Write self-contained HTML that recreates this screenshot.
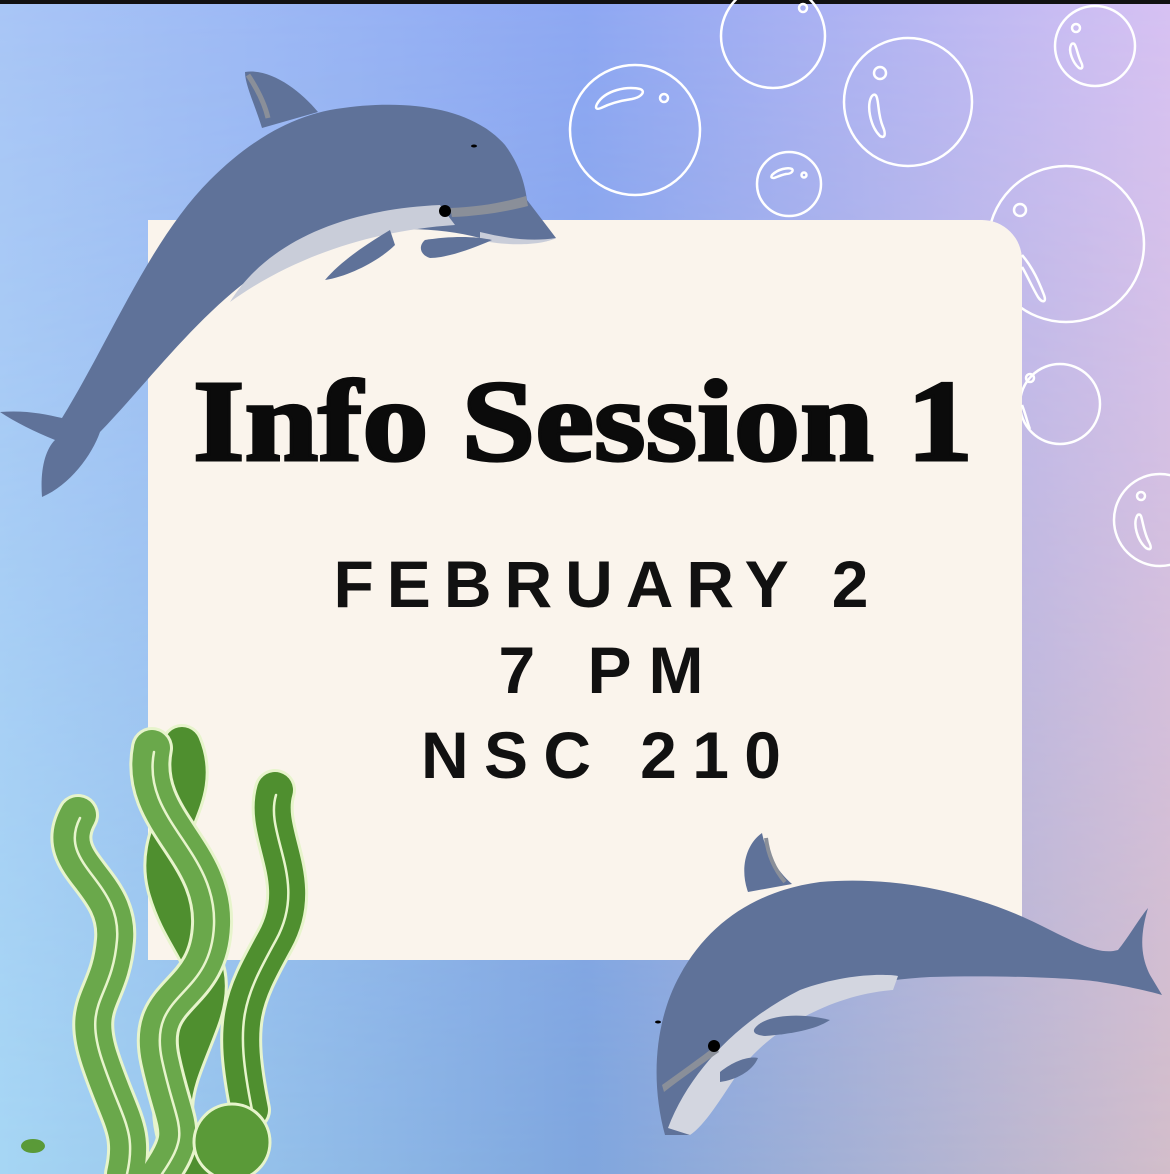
<!DOCTYPE html>
<html><head><meta charset="utf-8"><style>
html,body{margin:0;padding:0}
body{width:1170px;height:1174px;overflow:hidden;position:relative;font-family:"Liberation Sans",sans-serif}
svg{position:absolute;left:0;top:0}
</style></head><body>
<svg width="1170" height="1174" viewBox="0 0 1170 1174">
<defs>
<linearGradient id="gt" x1="0" y1="0" x2="1" y2="0">
<stop offset="0" stop-color="#a9c6f6"/><stop offset="0.5" stop-color="#8ea8f3"/><stop offset="1" stop-color="#d7c2f3"/></linearGradient>
<linearGradient id="gb" x1="0" y1="0" x2="1" y2="0">
<stop offset="0" stop-color="#a6d6f4"/><stop offset="0.5" stop-color="#7fa6de"/><stop offset="1" stop-color="#d2bdca"/></linearGradient>
<mask id="m"><linearGradient id="mv" x1="0" y1="0" x2="0" y2="1"><stop offset="0" stop-color="#000"/><stop offset="1" stop-color="#fff"/></linearGradient><rect width="1170" height="1174" fill="url(#mv)"/></mask>
</defs>
<rect width="1170" height="1174" fill="url(#gt)"/>
<rect width="1170" height="1174" fill="url(#gb)" mask="url(#m)"/>
<rect width="1170" height="4" fill="#111"/>
<!-- bubbles -->
<g fill="none" stroke="#fff" stroke-width="2.5">
<circle cx="635" cy="130" r="65"/><path d="M597 104c8-14 30-18 43-15 6 2 2 8-8 10-14 2-25 6-31 9-5 2-6 0-4-4z"/><circle cx="664" cy="98" r="4"/>
<circle cx="773" cy="36" r="52"/><circle cx="803" cy="8" r="4"/>
<circle cx="908" cy="102" r="64"/><circle cx="880" cy="73" r="6"/><path d="M872 96c-6 8-2 30 8 40 5 3 6-2 3-9-5-12-4-22-6-29-1-4-3-4-5-2z"/>
<circle cx="1095" cy="46" r="40"/><circle cx="1076" cy="28" r="4"/><path d="M1071 45c-3 6 2 18 8 23 4 2 4-2 2-6-3-6-4-13-6-17-1-2-3-2-4 0z"/>
<circle cx="789" cy="184" r="32"/><path d="M772 175c6-6 16-8 20-6 2 2-1 5-6 5-5 1-9 3-12 4-3 0-3-1-2-3z"/><circle cx="804" cy="175" r="2.5"/>
<circle cx="1066" cy="244" r="78"/><circle cx="1020" cy="210" r="6"/>
<circle cx="1060" cy="404" r="40"/>
<circle cx="1160" cy="520" r="46"/><circle cx="1141" cy="496" r="4"/><path d="M1137 516c-4 8 0 24 9 32 5 3 6 0 3-6-5-9-6-20-8-26-1-2-3-2-4 0z"/>
</g>
<!-- card -->
<path d="M148 220H982a40 40 0 0 1 40 40V920a40 40 0 0 1-40 40H148z" fill="#faf4ec"/>
<g fill="none" stroke="#fff" stroke-width="2.5">
<path d="M1022 255c12 14 18 30 22 40 3 8-2 8-6 2-6-10-12-24-16-30"/><path d="M1022 405c4 10 6 20 8 24"/><circle cx="1030" cy="378" r="4"/>
</g>
<!-- text -->
<text x="583" y="460" text-anchor="middle" font-family="'Liberation Serif',serif" font-weight="bold" font-size="116" textLength="780" lengthAdjust="spacingAndGlyphs" fill="#0b0b0b" stroke="#0b0b0b" stroke-width="3">Info Session 1</text>
<g font-family="'Liberation Sans',sans-serif" font-weight="bold" font-size="66" fill="#111" text-anchor="middle">
<text x="601" y="607" textLength="535" lengthAdjust="spacing">FEBRUARY 2</text>
<text x="601" y="693" textLength="205" lengthAdjust="spacing">7 PM</text>
<text x="601" y="778" textLength="360" lengthAdjust="spacing">NSC 210</text>
</g>
<!-- top dolphin -->
<path d="M262 128C255 105 245 85 245 72 270 68 300 90 318 112Z" fill="#5f7299"/>
<path d="M248 75C258 90 265 105 268 118" stroke="#8a8f99" stroke-width="5" fill="none"/>
<path d="M62 418C110 340 150 240 210 180 250 140 290 118 330 110 400 98 470 105 505 145 520 165 525 185 527 200L556 238C540 246 500 242 480 238 420 222 330 225 262 270 200 312 150 380 100 432 92 455 70 485 42 497 40 470 45 450 55 440 35 432 15 422 0 412 25 410 45 414 62 418Z" fill="#5f7299"/>
<path d="M230 302C262 250 330 210 440 205L455 225C380 230 300 252 230 302Z" fill="#c9cdd9"/>
<path d="M450 208C480 207 505 202 526 196L528 206C505 212 478 216 452 217Z" fill="#8a8f99"/>
<path d="M480 232C505 238 530 242 556 238 540 246 505 246 480 240Z" fill="#c9cdd9"/>
<circle cx="445" cy="211" r="6" fill="#000"/><ellipse cx="474" cy="146" rx="3" ry="1.5" fill="#000"/>
<path d="M390 230C365 245 340 262 325 280 350 276 380 260 395 245Z" fill="#5f7299"/>
<path d="M425 240C450 236 475 236 492 240 470 250 445 258 430 258 420 255 418 246 425 240Z" fill="#5f7299"/>
<!-- bottom dolphin -->
<path d="M748 892C740 870 745 845 762 833 766 852 776 870 792 884Z" fill="#5f7299"/>
<path d="M766 838C768 855 775 870 785 882" stroke="#8a8f99" stroke-width="4" fill="none"/>
<path d="M665 1135C650 1080 655 1020 680 975 710 920 760 890 820 882 900 875 980 895 1040 925 1080 945 1100 955 1118 950 1130 935 1138 920 1148 908 1140 935 1140 955 1150 975L1162 995C1145 990 1120 985 1100 982 1075 978 1000 975 930 977 870 980 800 995 750 1030 715 1060 700 1100 690 1135Z" fill="#5f7299"/>
<path d="M668 1128C690 1070 740 1020 800 990 840 975 880 973 898 976L893 990C830 995 770 1030 740 1070 720 1100 705 1125 690 1135Z" fill="#d3d6e0"/>
<path d="M662 1085C680 1072 700 1058 715 1046l4 6C702 1064 682 1078 664 1092Z" fill="#8a8f99"/>
<circle cx="714" cy="1046" r="6" fill="#000"/><ellipse cx="658" cy="1022" rx="3" ry="1.5" fill="#000"/>
<path d="M755 1028C765 1015 800 1012 830 1020 815 1030 790 1034 765 1036 755 1035 752 1032 755 1028Z" fill="#5f7299"/>
<path d="M720 1072C735 1060 750 1056 758 1058 752 1072 735 1080 720 1082Z" fill="#5f7299"/>
<!-- seaweed -->
<g fill="none" stroke-linecap="round">
<g stroke="#e7f4cc" stroke-width="42">
<path d="M182 745C205 800 150 830 168 890S222 960 200 1020 155 1110 195 1174"/>
<path d="M275 790C262 835 308 880 275 940S232 1020 250 1110"/>
</g>
<g stroke="#4f8f2f" stroke-width="36">
<path d="M182 745C205 800 150 830 168 890S222 960 200 1020 155 1110 195 1174"/>
<path d="M275 790C262 835 308 880 275 940S232 1020 250 1110"/>
</g>
<g stroke="#e7f4cc" stroke-width="42">
<path d="M78 815C50 865 120 880 115 940S80 1000 100 1060 135 1130 125 1174"/>
<path d="M152 748C138 820 215 850 212 925S145 990 160 1060 190 1130 160 1174"/>
</g>
<g stroke="#6aa84b" stroke-width="36">
<path d="M78 815C50 865 120 880 115 940S80 1000 100 1060 135 1130 125 1174"/>
<path d="M152 748C138 820 215 850 212 925S145 990 160 1060 190 1130 160 1174"/>
</g>
<g stroke="#e7f4cc" stroke-width="2.5">
<path d="M80 818C56 865 122 880 117 940S82 1000 102 1060 137 1130 127 1174"/>
<path d="M154 752C141 820 217 850 214 925S147 990 162 1060 192 1130 162 1174"/>
<path d="M276 795C264 835 309 880 276 940S234 1020 252 1110"/>
</g>
</g>
<circle cx="232" cy="1142" r="38" fill="#5a9a38" stroke="#e7f4cc" stroke-width="3"/>
<ellipse cx="33" cy="1146" rx="12" ry="7" fill="#5a9a38"/>
</svg>
</body></html>
